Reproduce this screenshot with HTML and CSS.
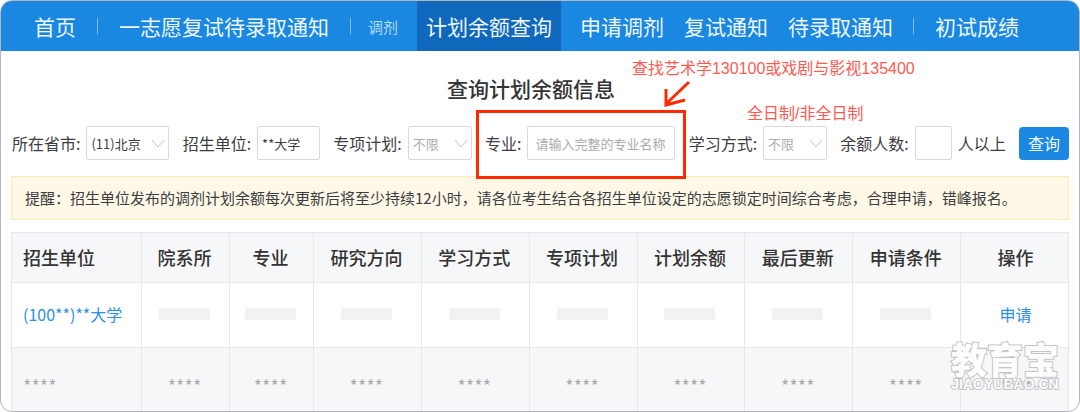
FILE: index.html
```html
<!DOCTYPE html>
<html lang="zh-CN">
  <head>
    <meta charset="UTF-8" />
    <meta name="viewport" content="width=device-width, initial-scale=1.0" />
    <title>查询计划余额信息</title>
    <link rel="stylesheet" href="styles.css">
  </head>
  <body>
    <div class="page">
      <nav class="nav">
        <a href="#">首页</a>
        <span class="line"></span>
        <a href="#">一志愿复试待录取通知</a>
        <span class="line"></span>
        <span class="nav-label">调剂</span>
        <a href="#" class="active">计划余额查询</a>
        <a href="#">申请调剂</a>
        <a href="#">复试通知</a>
        <a href="#">待录取通知</a>
        <span class="line"></span>
        <a href="#">初试成绩</a>
      </nav>

      <main class="content">
        <h2>查询计划余额信息</h2>

        <form class="search">
          <div class="field">
            <label for="province">所在省市:</label>
            <div class="select province">
              <select id="province">
                <option>(11)北京</option>
              </select>
              <svg viewBox="0 0 14 9"><path d="M1 1l6 7 6-7" /></svg>
            </div>
          </div>
          <div class="field">
            <label for="school">招生单位:</label>
            <input type="text" id="school" class="school" value="**大学" />
          </div>
          <div class="field">
            <label for="plan">专项计划:</label>
            <div class="select unset">
              <select id="plan">
                <option>不限</option>
              </select>
              <svg viewBox="0 0 14 9"><path d="M1 1l6 7 6-7" /></svg>
            </div>
          </div>
          <div class="field marked">
            <label for="major">专业:</label>
            <input type="text" id="major" class="major" placeholder="请输入完整的专业名称" />
            <span class="tip tip-major">查找艺术学130100或戏剧与影视135400</span>
            <svg class="arrow" viewBox="0 0 30 28">
              <path d="M27 2L5 23M4 9v16l19-5" />
            </svg>
          </div>
          <div class="field">
            <label for="mode">学习方式:</label>
            <div class="select unset">
              <select id="mode">
                <option>不限</option>
              </select>
              <svg viewBox="0 0 14 9"><path d="M1 1l6 7 6-7" /></svg>
              <span class="tip tip-mode">全日制/非全日制</span>
            </div>
          </div>
          <div class="field">
            <label for="count">余额人数:</label>
            <input type="text" id="count" class="count" />
            <span>人以上</span>
          </div>
          <button type="button">查询</button>
        </form>

        <p class="notice">提醒：招生单位发布的调剂计划余额每次更新后将至少持续12小时，请各位考生结合各招生单位设定的志愿锁定时间综合考虑，合理申请，错峰报名。</p>

        <table>
          <colgroup>
            <col class="col-school" />
            <col class="col-dept" />
            <col class="col-major" />
            <col span="7" />
          </colgroup>
          <thead>
            <tr>
              <th>招生单位</th>
              <th>院系所</th>
              <th>专业</th>
              <th>研究方向</th>
              <th>学习方式</th>
              <th>专项计划</th>
              <th>计划余额</th>
              <th>最后更新</th>
              <th>申请条件</th>
              <th>操作</th>
            </tr>
          </thead>
          <tbody>
            <tr>
              <td><a href="#">(100**)**大学</a></td>
              <td><span class="bar"></span></td>
              <td><span class="bar"></span></td>
              <td><span class="bar"></span></td>
              <td><span class="bar"></span></td>
              <td><span class="bar"></span></td>
              <td><span class="bar"></span></td>
              <td><span class="bar"></span></td>
              <td><span class="bar"></span></td>
              <td><a href="#">申请</a></td>
            </tr>
            <tr class="masked">
              <td>****</td>
              <td>****</td>
              <td>****</td>
              <td>****</td>
              <td>****</td>
              <td>****</td>
              <td>****</td>
              <td>****</td>
              <td>****</td>
              <td>****</td>
            </tr>
          </tbody>
        </table>
      </main>

      <div class="watermark">
        <span class="wm-name">教育宝</span>
        <span class="wm-site">JIAOYUBAO.CN</span>
      </div>
    </div>
  </body>
</html>
```
FILE: styles.css
```css
* {
  box-sizing: border-box;
}
body {
  margin: 0;
  font-family: "Noto Sans CJK SC", sans-serif;
  font-size: 16px;
  color: #3b3d42;
  background: white;
}
a {
  color: #2b8fe3;
  text-decoration: none;
}
.page {
  position: relative;
  border: 1px solid #b3b5bf;
  border-radius: 12px;
  overflow: hidden;
}

/* top navigation */
.nav {
  display: flex;
  align-items: center;
  height: 50px;
  padding-left: 33px;
  background: #1a87e1;
  font-size: 21px;
  white-space: nowrap;
}
.nav a {
  color: #eef7ff;
  line-height: 50px;
  margin-right: 21px;
}
.nav .line {
  width: 1px;
  height: 16px;
  margin-right: 21px;
  background: #7dbcf0;
}
.nav .nav-label {
  font-size: 15px;
  color: #b5dbf8;
  margin: 0 19px 0 -4px;
}
.nav .active {
  margin-right: 19px;
  padding: 0 9px;
  background: #1068bd;
}
.nav .active ~ a {
  margin-right: 20px;
}

.content {
  padding: 0 10px;
}
h2 {
  margin: 20px 18px 0 0;
  font-size: 21px;
  font-weight: 500;
  line-height: 34px;
  text-align: center;
  color: #333;
}

/* search form */
.search {
  display: flex;
  justify-content: space-between;
  align-items: center;
  margin-top: 21px;
  padding-left: 1px;
  white-space: nowrap;
}
.field {
  position: relative;
  display: flex;
  align-items: center;
  gap: 6px;
}
input,
select {
  height: 34px;
  border: 1px solid #d9d9d9;
  border-radius: 2px;
  background: white;
  font-family: inherit;
  font-size: 13px;
  color: #3b3d42;
}
input {
  padding: 0 4px;
}
input::placeholder {
  color: #aaacb0;
}
.select {
  position: relative;
  width: 64px;
}
.select select {
  width: 100%;
  padding: 0 4px;
  appearance: none;
}
.select svg {
  position: absolute;
  top: 13px;
  right: 4px;
  width: 14px;
  height: 9px;
  fill: none;
  stroke: #c4c6ca;
  pointer-events: none;
}
.select.province {
  width: 83px;
}
.select.unset select {
  color: #aaacb0;
}
.school {
  width: 63px;
}
.major {
  width: 148px;
  padding: 0 7px;
}
.count {
  width: 37px;
}
button {
  width: 50px;
  height: 33px;
  padding: 0;
  border: none;
  border-radius: 4px;
  background: #1a87e1;
  color: #eef7ff;
  font-family: inherit;
  font-size: 16px;
  cursor: pointer;
}

/* red hints over the form */
.marked::after {
  content: "";
  position: absolute;
  inset: -16px -11px -19px -9px;
  border: 3px solid #ff2a00;
  pointer-events: none;
}
.tip {
  position: absolute;
  font-family: "Liberation Sans", "Noto Sans CJK SC", sans-serif;
  line-height: 20px;
  color: #ff5a50;
}
.tip-major {
  top: -67px;
  left: 147px;
}
.tip-mode {
  top: -22px;
  left: -16px;
}
.arrow {
  position: absolute;
  top: -46px;
  left: 177px;
  width: 30px;
  height: 28px;
  fill: none;
  stroke: #ff2a00;
  stroke-width: 3;
}

.notice {
  margin: 16px 0 12px;
  padding: 9px 13px 10px;
  border: 1px solid #fdebb4;
  background: #fff8e6;
  font-size: 15px;
  line-height: 23px;
  white-space: nowrap;
}

/* result table */
table {
  width: 100%;
  table-layout: fixed;
  border-collapse: collapse;
}
.col-school {
  width: 130px;
}
.col-dept {
  width: 88px;
}
.col-major {
  width: 84px;
}
th,
td {
  padding: 0 2px 2px 0;
  border: 1px solid #e6e8eb;
  text-align: center;
}
th:first-child,
td:first-child {
  padding-left: 11px;
  text-align: left;
}
th:last-child,
td:last-child {
  padding-left: 4px;
}
th {
  height: 50px;
  background: #f6f7f9;
  font-size: 18px;
  font-weight: 500;
  color: #333;
}
td {
  height: 65px;
}
.bar {
  display: block;
  width: 51px;
  height: 12px;
  margin: 0 auto;
  background: #f2f2f2;
}
.masked td {
  height: 63px;
  padding-top: 14px;
  border-bottom: none;
  background: #f6f7f9;
  font-size: 18px;
  color: #aaa;
}

.watermark {
  position: absolute;
  right: 20px;
  bottom: 19px;
  display: flex;
  flex-direction: column;
  align-items: center;
  color: white;
  opacity: 0.8;
  paint-order: stroke fill;
  -webkit-text-stroke: 2px #b8b8ba;
  pointer-events: none;
}
.wm-name {
  font-size: 36px;
  font-weight: 900;
  line-height: 36px;
}
.wm-site {
  font-family: "Liberation Sans", sans-serif;
  font-size: 14px;
  font-weight: bold;
  line-height: 16px;
}
```
